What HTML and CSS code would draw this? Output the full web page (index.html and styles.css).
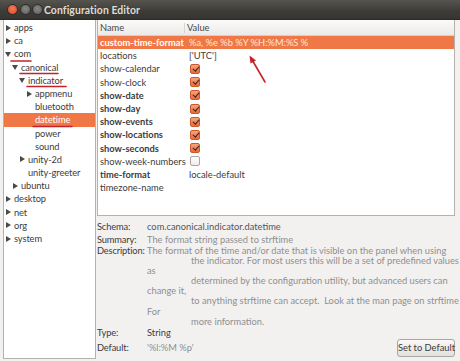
FILE: index.html
```html
<!DOCTYPE html>
<html>
<head>
<meta charset="utf-8">
<link rel="stylesheet" href="styles.css">
</head>
<body>
<div class="window">
  <div class="titlebar">
    <div class="wbtns"><span class="wb close"></span><span class="wb"></span><span class="wb"></span></div>
    <span class="title">Configuration Editor</span>
  </div>
  <div class="content">
    <div class="tree">
      <div class="trow l0"><span class="arr r"></span>apps</div>
      <div class="trow l0"><span class="arr r"></span>ca</div>
      <div class="trow l0"><span class="arr d"></span>com</div>
      <div class="trow l1"><span class="arr d"></span>canonical</div>
      <div class="trow l2"><span class="arr d"></span>indicator</div>
      <div class="trow l3"><span class="arr r"></span>appmenu</div>
      <div class="trow l3"><span class="arr"></span>bluetooth</div>
      <div class="trow l3 sel"><span class="arr"></span>datetime</div>
      <div class="trow l3"><span class="arr"></span>power</div>
      <div class="trow l3"><span class="arr"></span>sound</div>
      <div class="trow l2"><span class="arr r"></span>unity-2d</div>
      <div class="trow l2"><span class="arr"></span>unity-greeter</div>
      <div class="trow l1"><span class="arr r"></span>ubuntu</div>
      <div class="trow l0"><span class="arr r"></span>desktop</div>
      <div class="trow l0"><span class="arr r"></span>net</div>
      <div class="trow l0"><span class="arr r"></span>org</div>
      <div class="trow l0"><span class="arr r"></span>system</div>
    </div>
    <div class="right">
      <div class="list">
        <div class="hdr"><span class="c1">Name</span><span class="c2">Value</span></div>
        <div class="lrow sel"><span class="c1 b">custom-time-format</span><span class="c2">%a, %e %b %Y %H:%M:%S %</span></div>
        <div class="lrow"><span class="c1">locations</span><span class="c2">['UTC']</span></div>
        <div class="lrow"><span class="c1">show-calendar</span><span class="c2"><span class="cb on"></span></span></div>
        <div class="lrow"><span class="c1">show-clock</span><span class="c2"><span class="cb on"></span></span></div>
        <div class="lrow"><span class="c1 b">show-date</span><span class="c2"><span class="cb on"></span></span></div>
        <div class="lrow"><span class="c1 b">show-day</span><span class="c2"><span class="cb on"></span></span></div>
        <div class="lrow"><span class="c1 b">show-events</span><span class="c2"><span class="cb on"></span></span></div>
        <div class="lrow"><span class="c1 b">show-locations</span><span class="c2"><span class="cb on"></span></span></div>
        <div class="lrow"><span class="c1 b">show-seconds</span><span class="c2"><span class="cb on"></span></span></div>
        <div class="lrow"><span class="c1">show-week-numbers</span><span class="c2"><span class="cb"></span></span></div>
        <div class="lrow"><span class="c1 b">time-format</span><span class="c2">locale-default</span></div>
        <div class="lrow"><span class="c1">timezone-name</span><span class="c2"></span></div>
      </div>
      <div class="details">
        <div class="drow"><span class="lab">Schema:</span><span class="val mid">com.canonical.indicator.datetime</span></div>
        <div class="drow"><span class="lab">Summary:</span><span class="val light">The format string passed to strftime</span></div>
        <div class="drow desc"><span class="lab">Description:</span>
          <div class="val light lines">
            <div>The format of the time and/or date that is visible on the panel when using</div>
            <div class="ind">the indicator. For most users this will be a set of predefined values</div>
            <div>as</div>
            <div class="ind">determined by the configuration utility, but advanced users can</div>
            <div>change it,</div>
            <div class="ind">to anything strftime can accept.&nbsp; Look at the man page on strftime</div>
            <div>For</div>
            <div class="ind">more information.</div>
          </div>
        </div>
        <div class="drow type"><span class="lab">Type:</span><span class="val">String</span></div>
        <div class="drow last"><span class="lab">Default:</span><span class="val light">'%l:%M %p'</span><button class="btn">Set to Default</button></div>
      </div>
    </div>
  </div>
  <svg class="annot" width="460" height="361" viewBox="0 0 460 361">
    <g stroke="#c4232b" stroke-width="1.6" stroke-linecap="round" fill="none">
      <line x1="11" y1="61" x2="31" y2="61"/>
      <line x1="20" y1="73.5" x2="58" y2="73.5"/>
      <line x1="27" y1="86.5" x2="66" y2="86.5"/>
      <line x1="33" y1="126.5" x2="72" y2="126.5"/>
      <line x1="265" y1="82" x2="251" y2="58"/>
    </g>
    <path d="M249.5 55.5 L256 60.5 L250.5 63.5 Z" fill="#c4232b"/>
  </svg>
</div>
</body>
</html>
```
FILE: styles.css
```css
html, body {
  margin: 0;
  padding: 0;
}
body {
  width: 460px;
  height: 361px;
  overflow: hidden;
  background: #f2f1f0;
  font-family: Lato, "Noto Sans", sans-serif;
  font-size: 9.3px;
  color: #3c3c3c;
}
.window {
  position: relative;
  width: 460px;
  height: 361px;
  display: flex;
  flex-direction: column;
}
.titlebar {
  height: 19px;
  flex: none;
  background: linear-gradient(#55544f, #3c3b37 60%, #363531);
  display: flex;
  align-items: center;
  border-bottom: 1px solid #2a2926;
}
.wbtns {
  display: flex;
  gap: 1px;
  padding-left: 7px;
  width: 36px;
}
.wb {
  width: 9px;
  height: 9px;
  border-radius: 50%;
  background: radial-gradient(circle at 50% 40%, #8a8884, #5d5c58);
  border: 0.5px solid #2c2b28;
}
.wb.close {
  background: radial-gradient(circle at 50% 40%, #f47a58, #d8461f);
  margin-right: 1px;
}
.title {
  font-weight: bold;
  font-size: 10.4px;
  color: #dfdbd2;
  padding-left: 1px;
  letter-spacing: 0.1px;
}
.content {
  flex: 1;
  display: flex;
  padding: 0 5px 2px 3px;
  gap: 1px;
  min-height: 0;
}
.tree {
  width: 91px;
  flex: none;
  background: #fff;
  border: 1px solid #b5b2ac;
  border-top: none;
  padding-top: 1px;
}
.trow {
  height: 13.2px;
  line-height: 13.2px;
  display: flex;
  align-items: center;
  white-space: nowrap;
  color: #3c3c3c;
  letter-spacing: -0.1px;
}
.trow.l0 { padding-left: 1px; }
.trow.l1 { padding-left: 8px; }
.trow.l2 { padding-left: 15px; }
.trow.l3 { padding-left: 22px; }
.trow.sel {
  background: #f07746;
  color: #fff;
}
.arr {
  width: 9px;
  height: 6px;
  flex: none;
  position: relative;
}
.arr.r::before {
  content: "";
  position: absolute;
  left: 1px;
  top: 0;
  border-left: 5px solid #4a4a4a;
  border-top: 3px solid transparent;
  border-bottom: 3px solid transparent;
}
.arr.d::before {
  content: "";
  position: absolute;
  left: 0;
  top: 1px;
  border-top: 5px solid #4a4a4a;
  border-left: 3px solid transparent;
  border-right: 3px solid transparent;
}
.right {
  flex: 1;
  display: flex;
  flex-direction: column;
  min-width: 0;
}
.list {
  height: 195px;
  flex: none;
  background: #fff;
  border: 1px solid #b5b2ac;
  border-top: none;
}
.hdr {
  height: 15px;
  display: flex;
  align-items: center;
  background: linear-gradient(#fbfbfa, #ebeae8);
  border-bottom: 1px solid #d2d0cc;
  color: #4a4a4a;
}
.hdr .c1 {
  border-right: 1px solid #d6d4d0;
  height: 10px;
  line-height: 10px;
}
.c1 {
  width: 84px;
  padding-left: 2px;
  flex: none;
  white-space: nowrap;
}
.c2 {
  padding-left: 3px;
  white-space: nowrap;
  display: flex;
  align-items: center;
}
.hdr .c2 { padding-left: 2px; }
.lrow {
  height: 13.2px;
  display: flex;
  align-items: center;
  color: #3c3c3c;
}
.lrow .c1 { width: 86px; }
.b { font-weight: bold; }
.lrow.sel {
  background: #f07746;
  color: #fff;
}
.lrow.sel .c2 {
  color: #fde8dc;
}
.cb {
  width: 8px;
  height: 8px;
  border: 1px solid #a9a7a3;
  border-radius: 2px;
  background: linear-gradient(#ffffff, #ecebea);
  position: relative;
  margin-left: 1px;
}
.cb.on {
  border-color: #c85a2e;
  background: linear-gradient(#f7a37c, #e96a3c);
}
.cb.on::after {
  content: "";
  position: absolute;
  left: 2.5px;
  top: 0px;
  width: 2.5px;
  height: 5px;
  border-right: 1.5px solid #3c2015;
  border-bottom: 1.5px solid #3c2015;
  transform: rotate(40deg);
}
.details {
  flex: 1;
  padding-top: 4px;
  display: flex;
  flex-direction: column;
}
.drow {
  display: flex;
  height: 13px;
  align-items: center;
  white-space: nowrap;
}
.lab {
  width: 50px;
  flex: none;
  color: #3c3c3c;
  letter-spacing: -0.15px;
}
.val { color: #3c3c3c; }
.val.mid { color: #555; }
.val.light { color: #8f8f8f; }
.drow.desc {
  height: auto;
  align-items: flex-start;
}
.drow.desc .lab {
  line-height: 10.1px;
}
.lines div {
  height: 10.1px;
  line-height: 10.1px;
}
.lines .ind {
  padding-left: 44px;
}
.drow.type {
  height: 12px;
}
.drow.last {
  height: 18px;
}
.btn {
  margin-left: auto;
  width: 58px;
  height: 18px;
  padding: 0;
  font-family: Lato, "Noto Sans", sans-serif;
  font-size: 9.3px;
  color: #3c3c3c;
  background: linear-gradient(#f9f8f7, #e2e0dd);
  border: 1px solid #a8a6a2;
  border-radius: 3px;
}
.annot {
  position: absolute;
  left: 0;
  top: 0;
  pointer-events: none;
}
```
